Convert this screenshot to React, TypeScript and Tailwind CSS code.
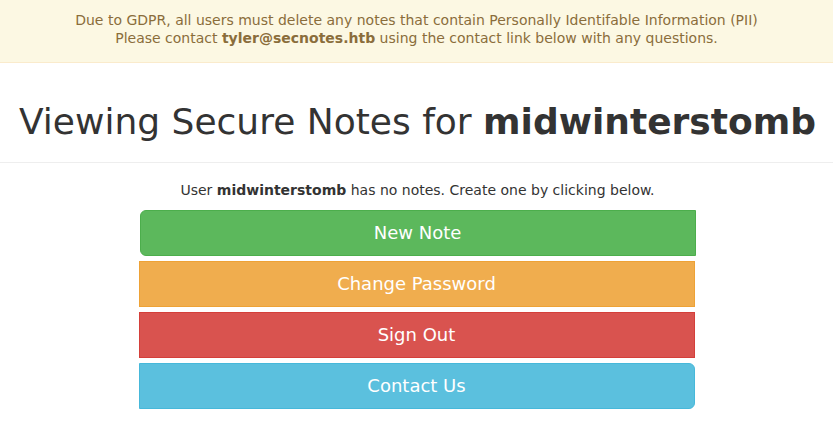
export default function App() {
  const font = { fontFamily: '"DejaVu Sans", sans-serif' };

  return (
    <div className="min-h-screen bg-white text-[#333]" style={font}>
      {/* GDPR banner */}
      <div className="border-b border-[#faebcc] bg-[#fcf8e3] pt-[12px] pb-[15px] text-center text-[14px] leading-[17.5px] text-[#8a6d3b]">
        <div>
          Due to GDPR, all users must delete any notes that contain Personally Identifable Information (PII)
        </div>
        <div>
          Please contact <b>tyler@secnotes.htb</b> using the contact link below with any questions.
        </div>
      </div>

      {/* Page header */}
      <div className="border-b border-[#eee] pt-[39px] pb-[20px]">
        <h1 className="pl-[2px] text-center text-[36px] leading-[39.6px] font-normal">
          Viewing Secure Notes for <b>midwinterstomb</b>
        </h1>
      </div>

      <p className="mt-[17px] pl-[2px] text-center text-[14px] leading-[20px]">
        User <b>midwinterstomb</b> has no notes. Create one by clicking below.
      </p>

      <div className="mx-auto mt-[10px] flex w-[556px] flex-col gap-[5px]">
        <button className="ml-px -mr-px h-[46px] rounded-l-[6px] border border-[#4cae4c] bg-[#5cb85c] text-[18px] text-white">
          New Note
        </button>
        <button className="h-[46px] border border-[#eea236] bg-[#f0ad4e] text-[18px] text-white">
          Change Password
        </button>
        <button className="h-[46px] border border-[#d43f3a] bg-[#d9534f] text-[18px] text-white">
          Sign Out
        </button>
        <button className="h-[46px] rounded-r-[6px] border border-[#46b8da] bg-[#5bc0de] text-[18px] text-white">
          Contact Us
        </button>
      </div>
    </div>
  );
}
